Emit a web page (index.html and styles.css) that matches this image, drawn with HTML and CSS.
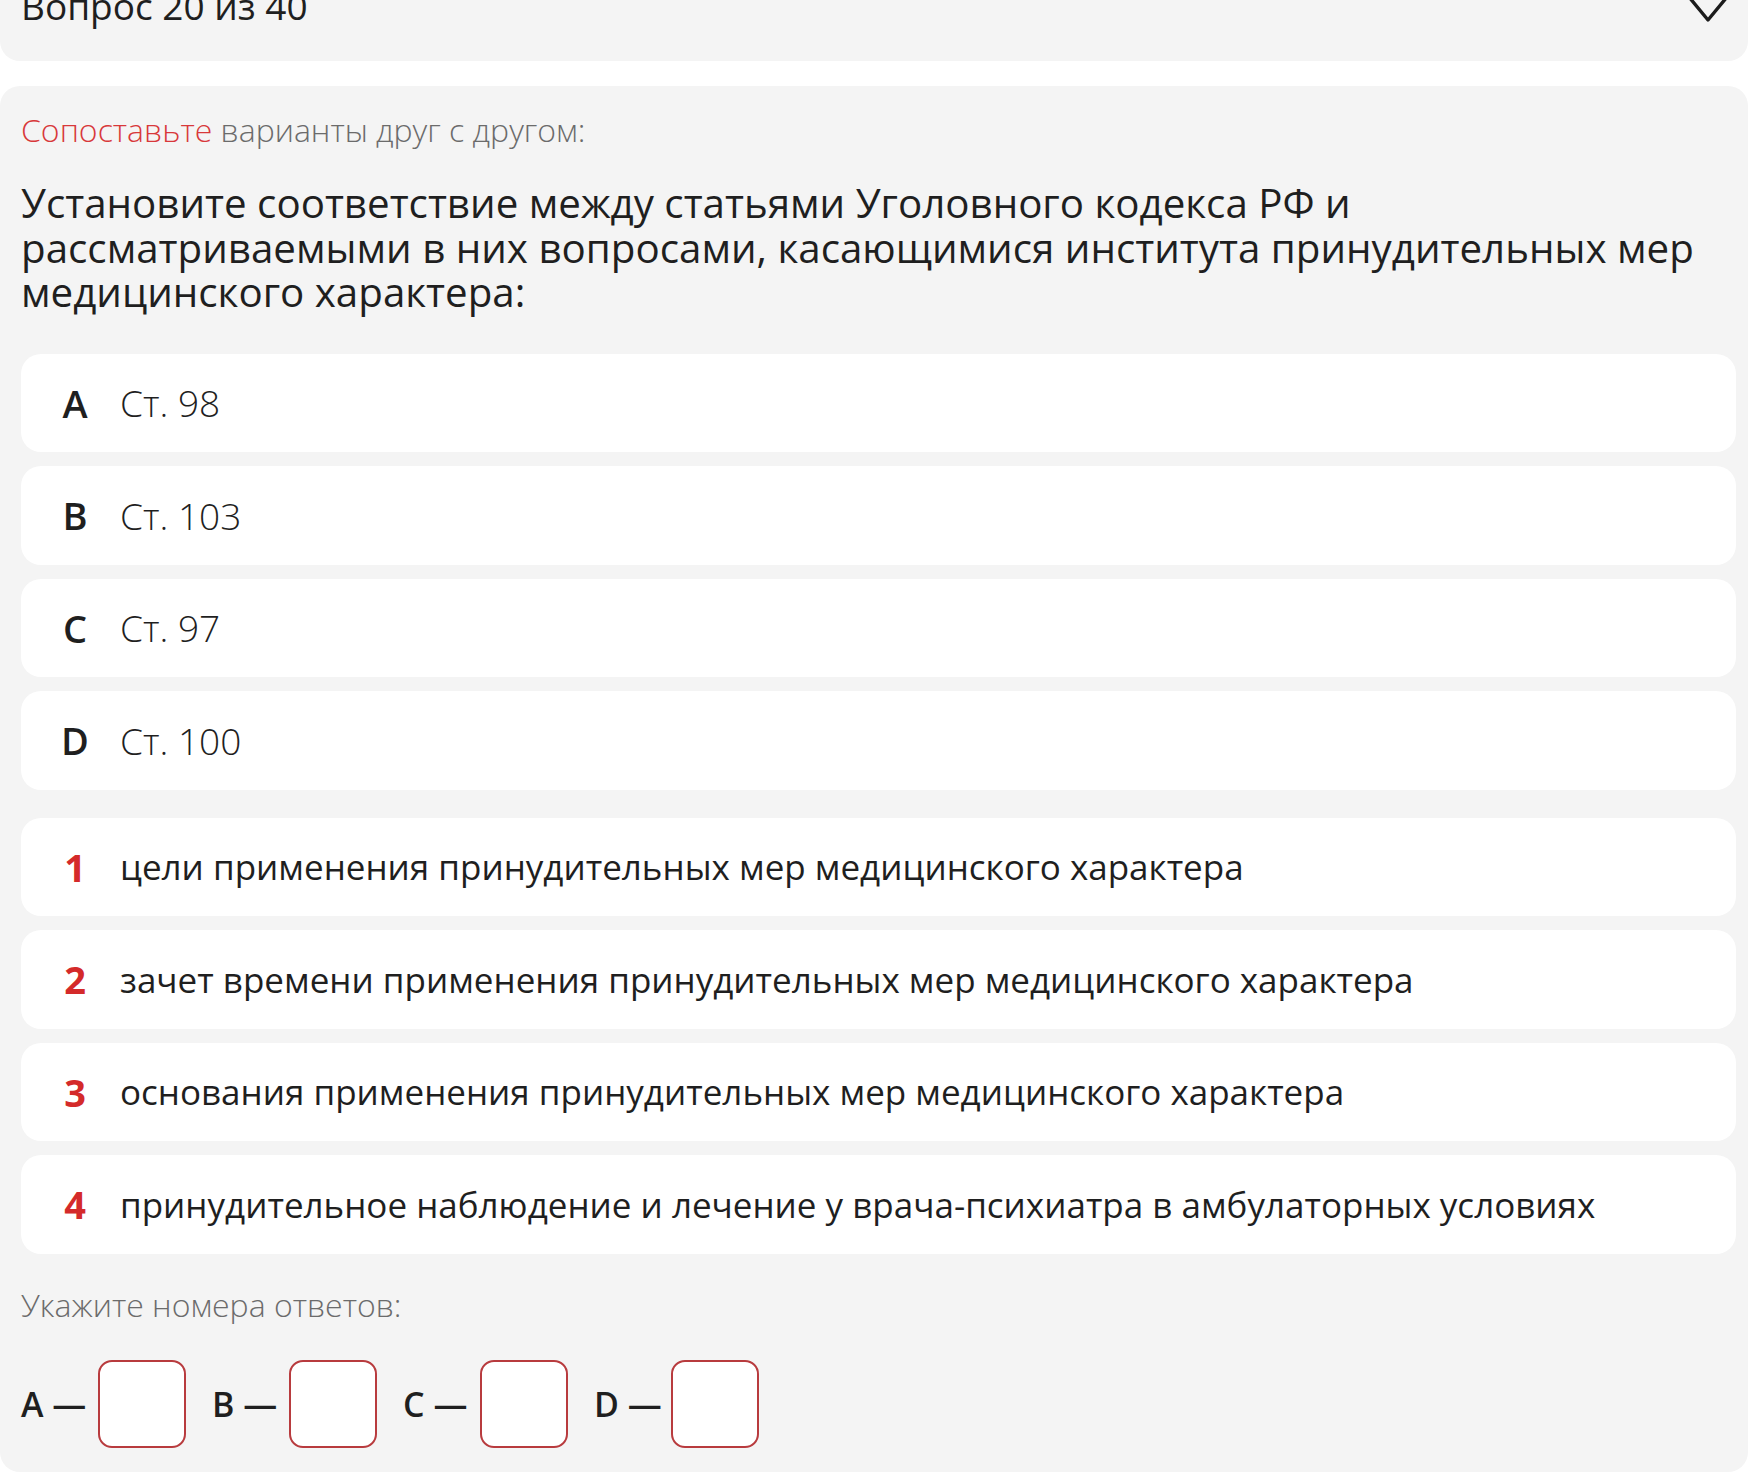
FILE: index.html
```html
<!DOCTYPE html>
<html lang="ru">
<head>
    <meta charset="UTF-8">
    <meta name="viewport" content="width=device-width, initial-scale=1.0">
    <title>Вопрос 20 из 40</title>
    <link rel="stylesheet" href="styles.css">
</head>
<body>
    <div class="top-card">
        <span class="top-title">Вопрос 20 из 40</span>
        <svg class="chevron" width="44" height="26" viewBox="0 0 44 26">
            <path d="M3 -3 L22 20 L41 -3" fill="none" stroke="#1c1c1c" stroke-width="3.4" stroke-linecap="round" stroke-linejoin="round"/>
        </svg>
    </div>

    <div class="question">
        <p class="hint"><span class="accent">Сопоставьте</span> варианты друг с другом:</p>
        <h2 class="question-text">Установите соответствие между статьями Уголовного кодекса РФ и рассматриваемыми в них вопросами, касающимися института принудительных мер медицинского характера:</h2>

        <div class="options letters">
            <div class="option"><span class="mark">A</span><span class="option-text light">Ст. 98</span></div>
            <div class="option"><span class="mark">B</span><span class="option-text light">Ст. 103</span></div>
            <div class="option"><span class="mark">C</span><span class="option-text light">Ст. 97</span></div>
            <div class="option"><span class="mark">D</span><span class="option-text light">Ст. 100</span></div>
        </div>

        <div class="options numbers">
            <div class="option"><span class="mark num">1</span><span class="option-text">цели применения принудительных мер медицинского характера</span></div>
            <div class="option"><span class="mark num">2</span><span class="option-text">зачет времени применения принудительных мер медицинского характера</span></div>
            <div class="option"><span class="mark num">3</span><span class="option-text">основания применения принудительных мер медицинского характера</span></div>
            <div class="option"><span class="mark num">4</span><span class="option-text">принудительное наблюдение и лечение у врача-психиатра в амбулаторных условиях</span></div>
        </div>

        <p class="hint answer-hint">Укажите номера ответов:</p>

        <div class="answers">
            <label class="answer"><span class="answer-label">A —</span><input type="text" class="answer-box"></label>
            <label class="answer"><span class="answer-label">B —</span><input type="text" class="answer-box"></label>
            <label class="answer"><span class="answer-label">C —</span><input type="text" class="answer-box"></label>
            <label class="answer"><span class="answer-label">D —</span><input type="text" class="answer-box"></label>
        </div>
    </div>
</body>
</html>
```

FILE: styles.css
```css
body {
    font-family: "Open Sans", Lato, Arial, sans-serif;
    background-color: #fff;
    color: #1f1f1f;
    margin: 0;
    padding: 0;
    overflow: hidden;
}
.top-card {
    height: 61px;
    background-color: #f4f4f4;
    border-radius: 0 0 20px 20px;
    display: flex;
    justify-content: space-between;
    align-items: flex-end;
    padding: 0 18px 0 21px;
    overflow: hidden;
    box-sizing: border-box;
}
.top-title {
    font-size: 37px;
    line-height: 34px;
    font-weight: 400;
    margin-bottom: 38px;
}
.chevron {
    margin-bottom: 35px;
}
.question {
    margin-top: 25px;
    background-color: #f4f4f4;
    border-radius: 20px;
    padding: 26px 12px 24px 21px;
}
.hint {
    margin: 0;
    font-size: 32px;
    line-height: 36px;
    font-weight: 300;
    color: #6b6b6b;
}
.accent {
    color: #d8383a;
}
.question-text {
    margin: 33px 0 0;
    font-size: 40.3px;
    line-height: 44.5px;
    font-weight: 400;
    color: #1f1f1f;
}
.options {
    display: flex;
    flex-direction: column;
    gap: 14px;
}
.options.letters {
    margin-top: 39px;
}
.options.numbers {
    margin-top: 28px;
}
.option {
    height: 98.5px;
    background-color: #fff;
    border-radius: 20px;
    display: flex;
    align-items: center;
    padding-left: 36px;
}
.mark {
    width: 36px;
    text-align: center;
    font-size: 38px;
    font-weight: 600;
    color: #1f1f1f;
}
.mark.num {
    color: #d42a2a;
    font-weight: 700;
}
.option-text {
    margin-left: 27px;
    font-size: 35px;
    color: #1f1f1f;
}
.option-text.light {
    font-size: 37px;
    font-weight: 300;
}
.answer-hint {
    margin-top: 33px;
}
.answers {
    display: flex;
    gap: 26px;
    margin-top: 37px;
}
.answer {
    display: flex;
    align-items: center;
    gap: 12px;
}
.answer-label {
    width: 65px;
    white-space: nowrap;
    font-size: 34px;
    font-weight: 600;
    color: #1f1f1f;
}
.answer-box {
    width: 88px;
    height: 88px;
    box-sizing: border-box;
    border: 2px solid #b83b3e;
    border-radius: 14px;
    background-color: #fff;
    margin: 0;
}
```
